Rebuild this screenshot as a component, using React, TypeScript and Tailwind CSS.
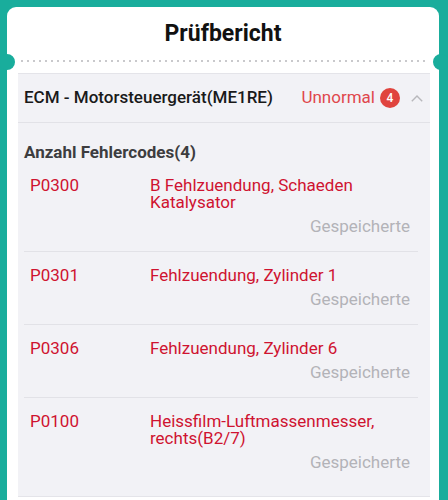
import React from "react";

type Row = { code: string; desc: string };

const rows: Row[] = [
  { code: "P0300", desc: "B Fehlzuendung, Schaeden Katalysator" },
  { code: "P0301", desc: "Fehlzuendung, Zylinder 1" },
  { code: "P0306", desc: "Fehlzuendung, Zylinder 6" },
  { code: "P0100", desc: "Heissfilm-Luftmassenmesser, rechts(B2/7)" },
];

export default function App() {
  return (
    <div
      className="min-h-[500px] h-[500px] overflow-hidden bg-[#19ad9c] pt-[7px] pl-[7px] pr-[9px]"
      style={{ fontFamily: "Roboto, 'Noto Sans', Arial, sans-serif" }}
    >
      <div className="relative flex h-[493px] flex-col rounded-t-[9px] bg-white">
        <div className="absolute left-[-8px] top-[47px] h-4 w-4 rounded-full bg-[#19ad9c]" />
        <div className="absolute right-[-10px] top-[47px] h-4 w-4 rounded-full bg-[#19ad9c]" />

        <div className="flex h-[55px] items-center justify-center">
          <h1 className="text-[23px] font-bold leading-[27px] text-[#111]">Prüfbericht</h1>
        </div>

        <div className="ml-[13px] mr-[11px] h-[2px]">
          <svg width="100%" height="2" className="block">
            <line x1="1" y1="1" x2="100%" y2="1" stroke="#c9c9cc" strokeWidth="2" strokeDasharray="2 4" />
          </svg>
        </div>

        <div className="ml-[11px] mr-[9px] mt-[11px] flex-1 border-y border-[#e4e4e9] bg-[#f2f2f6] pb-[9px]">
          <div className="flex h-[49px] items-center border-b border-[#e2e2e7] pl-[6px] pr-[7px]">
            <span className="flex-1 text-[17px] font-medium text-[#1a1a1a]">
              ECM - Motorsteuergerät(ME1RE)
            </span>
            <span className="text-[17px] text-[#e0474c]">Unnormal</span>
            <span className="ml-[5px] flex h-[20px] w-[20px] items-center justify-center rounded-full bg-[#e0443e] text-[12px] font-medium leading-none text-white">
              4
            </span>
            <svg width="12" height="7" viewBox="0 0 12 7" className="ml-[11px]">
              <path d="M0.8 6.2 6 1 11.2 6.2" fill="none" stroke="#b8b8bc" strokeWidth="1.4" />
            </svg>
          </div>

          <div className="pl-[6px] pt-[19px] text-[17px] font-bold leading-[20px] text-[#3d3d3f]">
            Anzahl Fehlercodes(4)
          </div>

          <div className="ml-[6px] mr-[12px]">
            {rows.map((r, i) => (
              <div
                key={r.code}
                className={
                  "pl-[6px] pr-[8px] pt-[15px] pb-[16px] " +
                  (i < rows.length - 1 ? "border-b border-[#e2e2e7]" : "")
                }
              >
                <div className="flex text-[17px] leading-[17px] text-[#cf1330]">
                  <span className="w-[120px] shrink-0">{r.code}</span>
                  <span className="flex-1">{r.desc}</span>
                </div>
                <div className="mt-[7px] text-right text-[17px] leading-[17px] text-[#b3b3b8]">
                  Gespeicherte
                </div>
              </div>
            ))}
          </div>
        </div>
        <div className="h-[3px]" />
      </div>
    </div>
  );
}
